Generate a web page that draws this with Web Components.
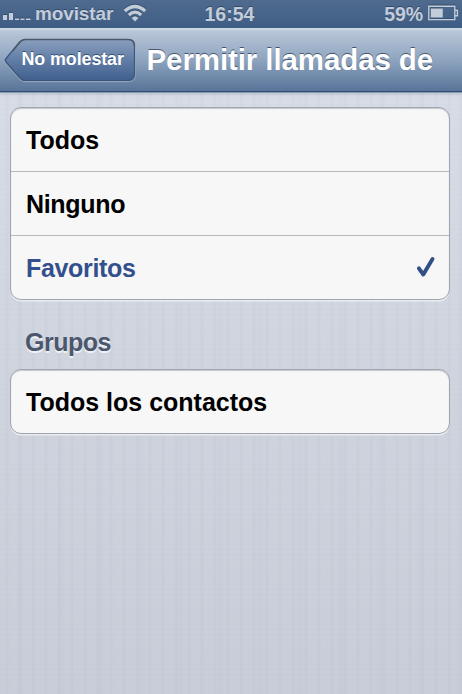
<!DOCTYPE html>
<html lang="es"><head><meta charset="utf-8"><title>No molestar</title>
<style>body{margin:0;overflow:hidden}option-row.tight{letter-spacing:-.32px}</style></head><body>
<settings-screen>
  <status-bar slot="status" carrier="movistar" time="16:54" battery="59%"></status-bar>
  <nav-bar slot="nav"><span slot="back">No molestar</span>Permitir llamadas de</nav-bar>
  <option-group>
    <option-row>Todos</option-row><option-row class="tight">Ninguno</option-row><option-row class="tight" selected>Favoritos</option-row>
  </option-group>
  <group-title>Grupos</group-title>
  <option-group><option-row>Todos los contactos</option-row></option-group>
</settings-screen>
<script>
const define = (name, render) => customElements.define(name, class extends HTMLElement {
  constructor() { super(); this.attachShadow({mode: 'open'}); }
  connectedCallback() { this.shadowRoot.innerHTML = render(this); }
});

define('settings-screen', () => `<style>
:host{display:flex;flex-direction:column;width:462px;height:694px;overflow:hidden;
 font:bold 25px/30px "Liberation Sans",Arial,sans-serif;
 background:
 repeating-linear-gradient(90deg,transparent 0 5px,rgba(110,125,155,.035) 6px 8px,transparent 9px 13px),
 repeating-linear-gradient(90deg,transparent 0 17px,rgba(110,125,155,.025) 19px 22px,transparent 24px 40px),
 repeating-linear-gradient(0deg,transparent 0 4px,rgba(110,125,155,.02) 4px 5px),
 linear-gradient(#d8dce6 92px,#d0d5df 340px,#c8cdd8)}
main{display:flex;flex-direction:column;padding:15px 12px 0 10px}
</style><slot name="status"></slot><slot name="nav"></slot><main><slot></slot></main>`);

define('status-bar', el => `<style>
:host{display:flex;align-items:center;height:28px;flex:none;box-sizing:border-box;padding:0 2px 0 2px;
 color:#c3ccd9;font-size:19px;line-height:28px;text-shadow:0 -1px 0 #324a6b;
 background:linear-gradient(#4f6b8e,#3f5d84)}
.side{flex:1;display:flex;align-items:center}
.end{justify-content:flex-end}
svg{display:block;flex:none}
.carrier{margin-left:4px;width:79px;letter-spacing:-.12px}
.time{font-size:19.5px;width:53px}
.battery{font-size:19.5px;margin-right:5px;letter-spacing:-.1px}
svg{filter:drop-shadow(0 -1px 0 #36506f)}
</style>
<div class="side"><svg width="29" height="28" fill="#c3ccd9"><path d="M1 15h4v5H1zM7 13h4v7H7zM13 18.400h4V20h-4zM18.500 18.400h4V20h-4zM24 18.400h4.500V20H24z"/></svg>
<span class="carrier">${el.getAttribute('carrier')}</span>
<svg width="24" height="28" viewBox="0 0 24 28" style="margin-left:9px" fill="none" stroke="#c3ccd9" stroke-width="3.200"><path d="M1.800 11Q12 2 22.200 11M5.800 15Q12 9.200 18.200 15"/><path d="M8.600 18Q12 14.600 15.400 18L12 21.500z" fill="#c3ccd9" stroke="none"/></svg></div>
<span class="time">${el.getAttribute('time')}</span>
<div class="side end"><span class="battery">${el.getAttribute('battery')}</span>
<svg width="32" height="28"><path d="M.8 6.200h26v13.400H.8zM27 10.300h2.400v5.400H27" fill="none" stroke="#c3ccd9" stroke-width="1.400"/><path d="M2.800 8.500h12v9h-12z" fill="#c3ccd9"/></svg></div>`);

define('nav-bar', () => `<style>
:host{display:flex;align-items:center;position:relative;height:64px;flex:none;box-sizing:border-box;padding:0 0 0 4px;
 color:#fff;border-top:2px solid #cbd6e3;border-bottom:1px solid #304d76;
 background:linear-gradient(#bac8da,#8da3be 50%,#587499);box-shadow:0 1px 0 #8c9ab0,0 2px 3px #7f8ba466}
.back{display:grid;align-items:center;width:132px;height:45px;flex:none;margin-bottom:1px}
.back svg,.label{grid-area:1/1}
.label{padding-left:17.500px;font-size:17.900px;line-height:24px;margin-top:-3px;letter-spacing:-.1px;text-shadow:0 -1px 0 #354f74;white-space:nowrap;z-index:1}
h1{margin:-1px 0 0 10.500px;font-size:29.500px;line-height:34px;letter-spacing:-.1px;text-shadow:0 -1.500px 0 #46566e;white-space:nowrap}
</style>
<div class="back"><svg width="132" height="45" viewBox="0 0 132 45"><defs><linearGradient id="g" x2="0" y2="1"><stop stop-color="#8a9fbd"/><stop offset=".5" stop-color="#607da6"/><stop offset="1" stop-color="#41608e"/></linearGradient></defs>
<path d="M21 2H124Q131 2 131 9V37Q131 43.500 124 43.500H21Q18 43.500 15 40L2 25Q.5 23.200 2 21.500L15 6Q18 2 21 2z" fill="none" stroke="#b3c1d380" stroke-width="1.500"/>
<path d="M21 1.500H124Q130.500 1.500 130.500 8V36Q130.500 42.500 124 42.500H21Q18 42.500 15 39L2 24Q.5 22.200 2 20.500L15 5Q18 1.500 21 1.500z" fill="url(#g)" stroke="#3c5679" stroke-width="1.200"/>
<path d="M9 12.500L15 5Q18 1.500 21 1.500H124Q130.500 1.500 130.500 8" fill="none" stroke="#4d5868" stroke-width="1.500"/></svg>
<span class="label"><slot name="back"></slot></span></div><h1><slot></slot></h1>`);

define('option-group', () => `<style>
:host{display:block;box-sizing:border-box;width:440px;border:1.500px solid #9fa5b0;border-radius:11px;overflow:hidden;background:#f7f7f7;box-shadow:0 2px 0 -.5px #e9ecf1,inset 0 1px 1px #c4c8ce}
</style><slot></slot>`);

define('option-row', el => `<style>
:host{display:flex;align-items:center;justify-content:space-between;box-sizing:border-box;height:64px;padding:1px 13px 0 15px;color:#000;border-bottom:1px solid #b5b8bd}
:host(:last-child){border-bottom:0;height:63px;padding-top:0}
:host([selected]){color:#334f8c}
svg{margin-top:-2px}
</style><slot></slot>${el.hasAttribute('selected') ? '<svg width="20" height="22" viewBox="0 0 20 22" fill="none" stroke="#334f87" stroke-width="3.900" stroke-linecap="round" stroke-linejoin="round"><path d="M2.900 12.300L7.300 18.500L16.500 3"/></svg>' : ''}`);

define('group-title', () => `<style>
:host{display:block;padding:27px 0 12px 15px;color:#4c566c;letter-spacing:-.5px;text-shadow:0 1.500px 0 #eef1f6}
</style><slot></slot>`);
</script></body></html>
